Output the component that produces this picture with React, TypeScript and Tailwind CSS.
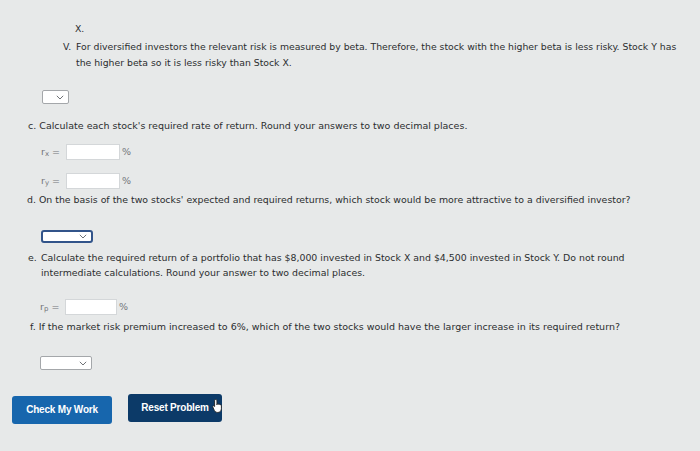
import React from "react";

function Select({ w, focused }: { w: string; focused?: boolean }) {
  return (
    <div
      className={`flex h-full ${w} items-center justify-end bg-white pr-[4px] ${
        focused ? "rounded-[3px] border-2 border-[#32548a]" : "rounded-[2px] border border-[#a4a7aa]"
      }`}
    >
      <svg width="8" height="5" viewBox="0 0 8 5">
        <path d="M0.8 0.8 L4 4 L7.2 0.8" fill="none" stroke="#6f7276" strokeWidth="1" />
      </svg>
    </div>
  );
}

function Field({ sub, label, w }: { sub: string; label: string; w: string }) {
  return (
    <div className="flex h-[16px] items-center">
      <span className={`${label} leading-none text-[#72757a]`}>
        r<sub className="relative top-[1px] align-baseline text-[7px] leading-none">{sub}</sub> =
      </span>
      <div className={`h-[16px] ${w} border border-[#d4d7d9] bg-white`} />
      <span className="ml-[2px] leading-none text-[#72757a]">%</span>
    </div>
  );
}

export default function App() {
  return (
    <div
      className="h-[451px] w-[700px] overflow-hidden bg-[#e7e9e9] text-[9.5px] leading-[16px] text-[#2b2d2f]"
      style={{ fontFamily: '"DejaVu Sans", Verdana, sans-serif' }}
    >
      <div className="pt-[21px]">
        <p className="pl-[75px] text-[9.3px]">X.</p>

        <div className="mt-[2px] flex pl-[63px] text-[9.3px]">
          <span className="w-[13px] shrink-0">V.</span>
          <p className="w-[612px]">
            For diversified investors the relevant risk is measured by beta. Therefore, the stock with the higher beta is
            less risky. Stock Y has the higher beta so it is less risky than Stock X.
          </p>
        </div>

        <div className="mt-[19px] h-[14px] pl-[42px]">
          <Select w="w-[27px]" />
        </div>

        <p className="mt-[14px] pl-[28px]">
          c. Calculate each stock's required rate of return. Round your answers to two decimal places.
        </p>

        <div className="mt-[10px] pl-[41px]">
          <Field sub="x" label="w-[25px]" w="w-[54px]" />
        </div>
        <div className="mt-[13px] pl-[41px]">
          <Field sub="y" label="w-[25px]" w="w-[54px]" />
        </div>

        <p className="mt-[3px] pl-[27px] text-[9.4px]">
          d. On the basis of the two stocks' expected and required returns, which stock would be more attractive to a
          diversified investor?
        </p>

        <div className="mt-[22px] h-[13px] pl-[41px]">
          <Select w="w-[52px]" focused />
        </div>

        <div className="mt-[7px] flex pl-[28px] text-[9.4px] leading-[15px]">
          <span className="w-[13px] shrink-0">e.</span>
          <p className="w-[600px]">
            Calculate the required return of a portfolio that has $8,000 invested in Stock X and $4,500 invested in
            Stock Y. Do not round intermediate calculations. Round your answer to two decimal places.
          </p>
        </div>

        <div className="mt-[19px] pl-[40px]">
          <Field sub="p" label="w-[25px]" w="w-[52px]" />
        </div>

        <p className="mt-[4px] pl-[30px]">
          f. If the market risk premium increased to 6%, which of the two stocks would have the larger increase in its
          required return?
        </p>

        <div className="mt-[21px] h-[14px] pl-[40px]">
          <Select w="w-[52px]" />
        </div>

        <div
          className="mt-[24px] flex items-start gap-[16px] pl-[12px] text-[10px] font-bold tracking-[-0.2px] text-white"
          style={{ fontFamily: '"Liberation Sans", Arial, sans-serif' }}
        >
          <button className="mt-[2px] h-[28px] w-[100px] rounded-[3px] bg-[#1766ad]">Check My Work</button>
          <div className="relative">
            <button className="h-[28px] w-[94px] rounded-[3px] bg-[#0c3a68]">Reset Problem</button>
            <svg className="absolute left-[84px] top-[4px]" width="13" height="15" viewBox="0 0 14 16">
              <path
                d="M4 1.5c.8 0 1.3.5 1.3 1.3v4.5l.3-1c.6-.4 1.4-.1 1.6.5.5-.4 1.3-.2 1.5.4.5-.3 1.3 0 1.4.7v3.5c0 2.4-1.6 4.1-3.9 4.1-1.7 0-2.8-.8-3.7-2.2L.9 9.7c-.4-.6-.1-1.3.6-1.4.5-.1.9.2 1.2.6l.1.2V2.8c0-.8.4-1.3 1.2-1.3z"
                fill="#fff"
                stroke="#1b1b1b"
                strokeWidth="0.9"
              />
            </svg>
          </div>
        </div>
      </div>
    </div>
  );
}
